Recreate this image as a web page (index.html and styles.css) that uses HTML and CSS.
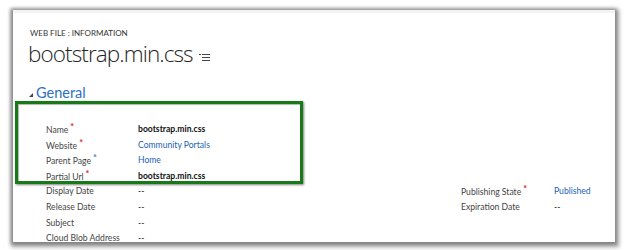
FILE: index.html
```html
<!DOCTYPE html>
<html>
<head>
<meta charset="utf-8">
<link rel="stylesheet" href="styles.css">
</head>
<body>
<div class="panel">
  <div class="entity">WEB FILE : INFORMATION</div>
  <div class="title">bootstrap.min.css <svg class="menu" width="12" height="8" viewBox="0 0 12 8"><rect x="0" y="1" width="2" height="1" fill="#444"/><rect x="3" y="1" width="8" height="1" fill="#444"/><rect x="3" y="4" width="8" height="1" fill="#444"/><rect x="3" y="7" width="8" height="1" fill="#444"/></svg></div>
  <div class="section"><span class="tri"></span>General</div>
  <div class="grid">
    <div class="lbl">Name<span class="req">*</span></div><div class="val bold">bootstrap.min.css</div><div></div><div></div>
    <div class="lbl">Website<span class="req">*</span></div><div class="val link">Community Portals</div><div></div><div></div>
    <div class="lbl">Parent Page<span class="req blue">*</span></div><div class="val link">Home</div><div></div><div></div>
    <div class="lbl">Partial Url<span class="req">*</span></div><div class="val bold">bootstrap.min.css</div><div></div><div></div>
    <div class="lbl">Display Date</div><div class="val">--</div><div class="lbl">Publishing State<span class="req">*</span></div><div class="val link">Published</div>
    <div class="lbl">Release Date</div><div class="val">--</div><div class="lbl">Expiration Date</div><div class="val">--</div>
    <div class="lbl">Subject</div><div class="val">--</div><div></div><div></div>
    <div class="lbl">Cloud Blob Address</div><div class="val">--</div><div></div><div></div>
  </div>
  <div class="highlight"></div>
</div>
</body>
</html>
```
FILE: styles.css
```css
html, body {
  margin: 0;
  padding: 0;
  background: #ffffff;
}
body {
  width: 628px;
  height: 250px;
  overflow: hidden;
  font-family: "Lato", "Open Sans", sans-serif;
}
.panel {
  position: relative;
  margin: 10px 0 0 13px;
  width: 602px;
  height: 232px;
  background: #ffffff;
  border-top: 3px solid #f3f3f3;
  box-sizing: border-box;
  box-shadow: 1px 2px 4px 3px rgba(0,0,0,0.38), -1px 0 3px 2px rgba(0,0,0,0.2);
  overflow: hidden;
  padding-left: 15px;
}
.entity {
  margin-top: 16px;
  font-size: 8px;
  line-height: 8px;
  color: #333;
  padding-left: 2px;
}
.title {
  margin-top: 3px;
  display: flex;
  align-items: center;
  font-family: "Open Sans", "Lato", sans-serif;
  font-size: 22.5px;
  font-weight: 300;
  letter-spacing: -0.9px;
  line-height: 28px;
  color: #262626;
}
.menu {
  margin-left: 6px;
  margin-top: 6px;
}
.section {
  margin-top: 15px;
  display: flex;
  align-items: center;
  font-size: 14.5px;
  line-height: 20px;
  color: #2a6fc2;
  padding-left: 1px;
}
.tri {
  width: 0;
  height: 0;
  border-left: 4px solid transparent;
  border-bottom: 4px solid #444;
  margin-right: 3px;
  margin-top: 3px;
}
.grid {
  margin-top: 19px;
  margin-left: 18px;
  display: grid;
  grid-template-columns: 92px 323px 93px auto;
  grid-auto-rows: 15.6px;
  font-size: 8.6px;
  line-height: 15.6px;
  color: #444;
}
.lbl {
  white-space: nowrap;
}
.val {
  color: #111;
}
.bold {
  font-weight: 700;
}
.link {
  color: #1a5fb4;
}
.req {
  color: #e02020;
  font-size: 9px;
  font-weight: 700;
  position: relative;
  top: -3px;
  margin-left: 2px;
}
.req.blue {
  color: #3a7fd0;
}
.highlight {
  position: absolute;
  left: 2px;
  top: 88px;
  width: 288px;
  height: 83px;
  box-sizing: border-box;
  border: 3px solid #177a17;
  box-shadow: 1px 1px 2px rgba(0,0,0,0.5), inset 1px 1px 1px rgba(0,0,0,0.3);
}
```
